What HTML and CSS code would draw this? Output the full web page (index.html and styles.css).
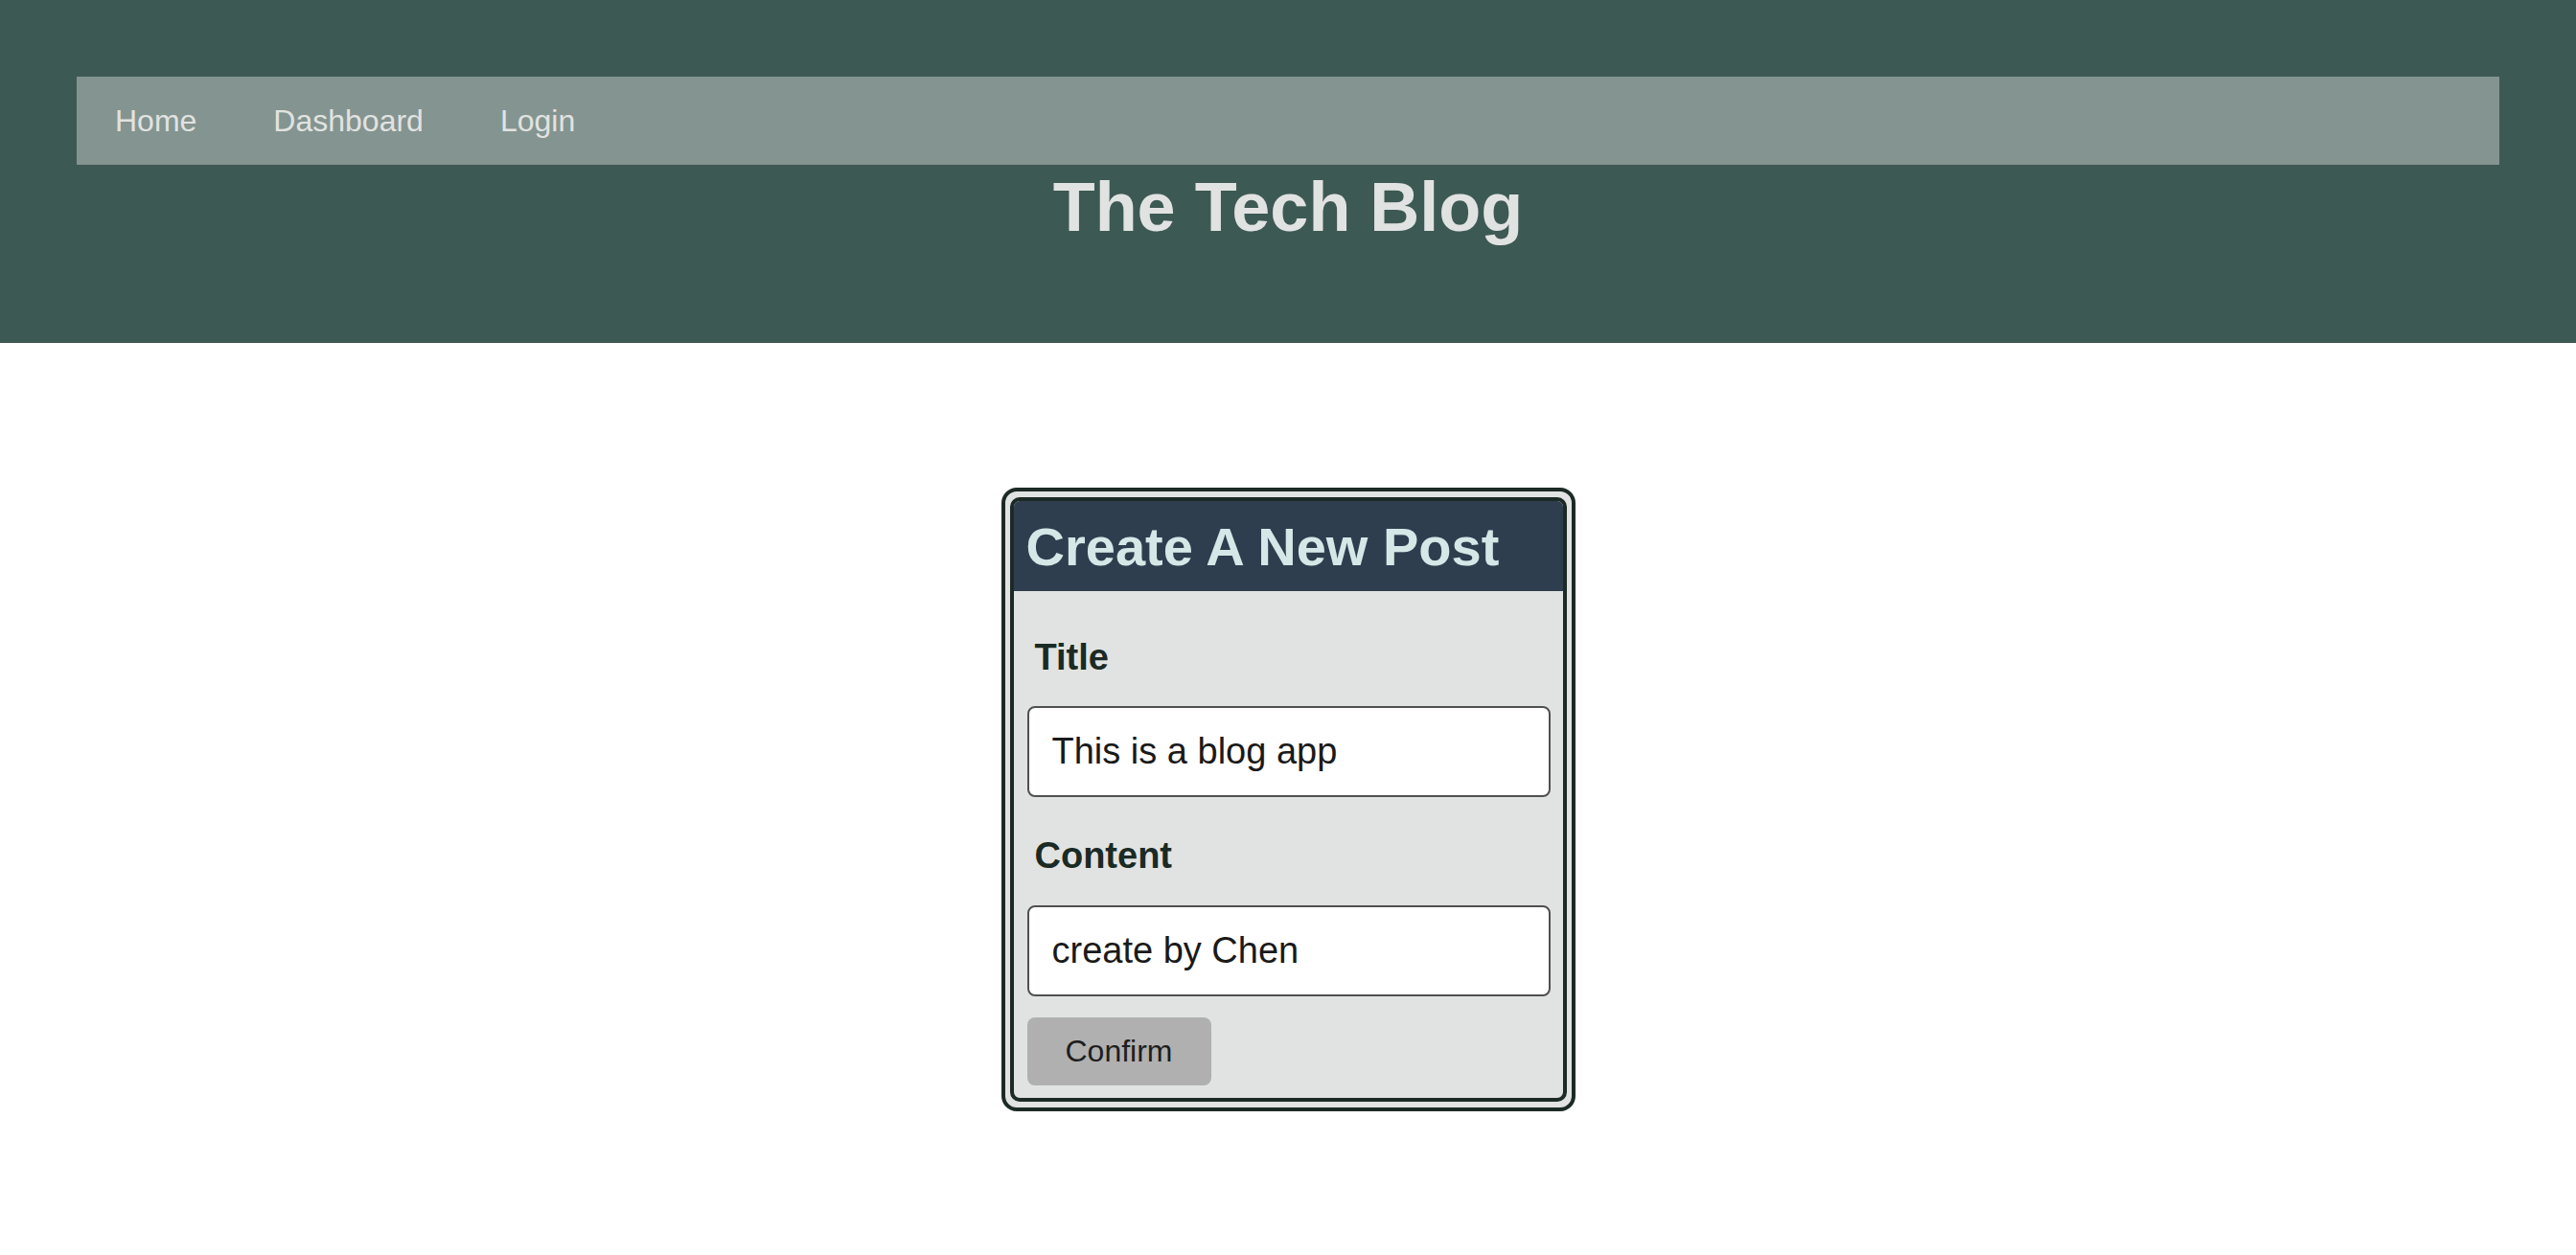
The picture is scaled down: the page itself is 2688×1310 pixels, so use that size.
FILE: index.html
```html
<!DOCTYPE html>
<html lang="en">
<head>
<meta charset="utf-8">
<title>The Tech Blog</title>
<link rel="stylesheet" href="styles.css">
</head>
<body>
<header class="site-header">
  <nav class="nav">
    <a class="nav-link" href="#">Home</a>
    <a class="nav-link" href="#">Dashboard</a>
    <a class="nav-link" href="#">Login</a>
  </nav>
  <h1 class="site-title">The Tech Blog</h1>
</header>
<main class="main">
  <div class="card-outer">
    <form class="card">
      <h2 class="card-head">Create A New Post</h2>
      <div class="card-body">
        <label class="field-label" for="title">Title</label>
        <input class="field-input" id="title" type="text" value="This is a blog app">
        <label class="field-label field-label-2" for="content">Content</label>
        <input class="field-input" id="content" type="text" value="create by Chen">
        <button class="confirm" type="button">Confirm</button>
      </div>
    </form>
  </div>
</main>
</body>
</html>
```
FILE: styles.css
```css
* { box-sizing: border-box; }
html, body { margin: 0; padding: 0; background: #ffffff; }
body { font-family: "Liberation Sans", Arial, sans-serif; }

.site-header {
  background: #3d5953;
  padding: 80px 80px 101px;
}
.nav {
  height: 92px;
  background: #849490;
  display: flex;
  align-items: center;
}
.nav-link {
  padding: 0 40px;
  font-size: 32px;
  color: #e1e3e1;
  text-decoration: none;
}
.site-title {
  margin: 3px 0 0;
  text-align: center;
  font-size: 72px;
  font-weight: bold;
  color: #e1e3e2;
  line-height: normal;
}

.main {
  display: flex;
  justify-content: center;
  padding-top: 151px;
  padding-bottom: 100px;
}
.card-outer {
  width: 599px;
  border: 4px solid #1b2a24;
  border-radius: 16px;
  background: #e1e3e2;
  padding: 6px 5px;
}
.card {
  border: 4px solid #1b2a24;
  border-radius: 10px;
  background: #e1e3e2;
  overflow: hidden;
  margin: 0;
}
.card-head {
  margin: 0;
  background: #2e3e4f;
  color: #d6e7e7;
  font-size: 56px;
  font-weight: bold;
  line-height: normal;
  padding: 15px 13px 14px;
}
.card-body {
  display: flex;
  flex-direction: column;
  align-items: flex-start;
  padding: 48px 13px 13px 14px;
}
.field-label {
  font-size: 38px;
  font-weight: bold;
  color: #1b2a24;
  padding: 0 8px;
  margin-bottom: 29px;
  line-height: normal;
}
.field-label-2 {
  margin-top: 40px;
  margin-bottom: 30px;
}
.field-input {
  width: 546px;
  height: 95px;
  border: 2px solid #505050;
  border-radius: 8px;
  background: #ffffff;
  padding: 0 24px;
  font-family: "Liberation Sans", Arial, sans-serif;
  font-size: 38px;
  color: #1a1a1a;
  outline: none;
}
.confirm {
  margin-top: 22px;
  width: 192px;
  height: 71px;
  border: none;
  border-radius: 8px;
  background: #b0b0b0;
  font-family: "Liberation Sans", Arial, sans-serif;
  font-size: 32px;
  color: #1e1e1e;
  padding: 0;
}
```
